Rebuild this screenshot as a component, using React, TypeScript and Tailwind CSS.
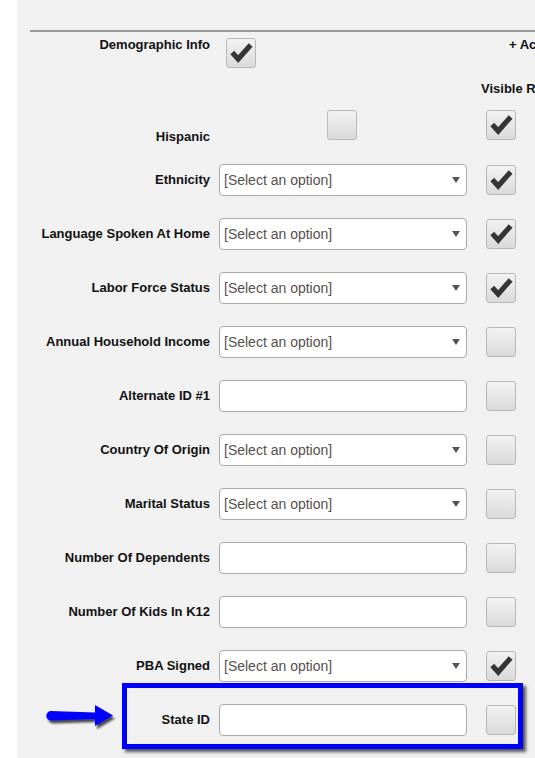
import React from 'react';

type Row = { label: string; kind: 'select' | 'text'; visible: boolean };

const ROWS: Row[] = [
  { label: 'Ethnicity', kind: 'select', visible: true },
  { label: 'Language Spoken At Home', kind: 'select', visible: true },
  { label: 'Labor Force Status', kind: 'select', visible: true },
  { label: 'Annual Household Income', kind: 'select', visible: false },
  { label: 'Alternate ID #1', kind: 'text', visible: false },
  { label: 'Country Of Origin', kind: 'select', visible: false },
  { label: 'Marital Status', kind: 'select', visible: false },
  { label: 'Number Of Dependents', kind: 'text', visible: false },
  { label: 'Number Of Kids In K12', kind: 'text', visible: false },
  { label: 'PBA Signed', kind: 'select', visible: true },
];

function CheckBox({ checked }: { checked: boolean }) {
  return (
    <div className="w-[30px] h-[30px] shrink-0 rounded-[3px] border border-[#b8b8b8] bg-gradient-to-b from-[#f2f2f2] to-[#dadada] flex items-center justify-center">
      {checked && (
        <svg width="30" height="30" viewBox="0 0 30 30">
          <polyline
            points="7.5,16.5 12,21.5 23.5,8.5"
            fill="none"
            stroke="#353535"
            strokeWidth="5.5"
            strokeLinecap="square"
            strokeLinejoin="miter"
          />
        </svg>
      )}
    </div>
  );
}

function SelectBox() {
  return (
    <div className="w-[248px] h-[32px] shrink-0 bg-white border border-[#aaaaaa] rounded-[4px] flex items-center justify-between pl-[4px] pr-[6px]">
      <span className="text-[14px] text-[#574f4f]">[Select an option]</span>
      <svg width="8" height="6" viewBox="0 0 8 6">
        <polygon points="0,0 8,0 4,6" fill="#555" />
      </svg>
    </div>
  );
}

function TextBox() {
  return <div className="w-[248px] h-[32px] shrink-0 bg-white border border-[#aaaaaa] rounded-[4px]" />;
}

function FieldRow({ row }: { row: Row }) {
  return (
    <div className="flex items-center h-[32px]">
      <div className="w-[193px] shrink-0 text-right font-bold text-[13px] text-[#111] whitespace-nowrap">{row.label}</div>
      <div className="ml-[9px] shrink-0">{row.kind === 'select' ? <SelectBox /> : <TextBox />}</div>
      <div className="ml-[19px] shrink-0">
        <CheckBox checked={row.visible} />
      </div>
    </div>
  );
}

export default function App() {
  return (
    <div className="w-[535px] h-[758px] flex overflow-hidden bg-white font-['Liberation_Sans',Arial,sans-serif]">
      <div className="w-[17px] shrink-0 bg-white" />
      <div className="relative flex-1 bg-[#f1f1f1] overflow-hidden">
        <div className="ml-[13px] mt-[30px] border-t-2 border-[#9a9a9a]" />

        {/* Header */}
        <div className="flex h-[30px] mt-[6px]">
          <div className="w-[193px] shrink-0 text-right font-bold text-[13px] text-[#111] whitespace-nowrap leading-[15px] mt-[-1px]">
            Demographic Info
          </div>
          <div className="ml-[16px] shrink-0">
            <CheckBox checked />
          </div>
          <div className="ml-[253px] shrink-0 font-bold text-[13px] text-[#111] whitespace-nowrap leading-[15px] mt-[-1px]">
            + Accommodations
          </div>
        </div>
        <div className="ml-[464px] mt-[13px] font-bold text-[13px] text-[#111] whitespace-nowrap leading-[15px]">
          Visible Required
        </div>

        {/* Hispanic */}
        <div className="flex mt-[14px] h-[32px]">
          <div className="w-[193px] shrink-0 text-right font-bold text-[13px] text-[#111] self-end leading-[15px] mb-[-2px]">
            Hispanic
          </div>
          <div className="ml-[117px] shrink-0">
            <CheckBox checked={false} />
          </div>
          <div className="ml-[129px] shrink-0">
            <CheckBox checked />
          </div>
        </div>

        <div className="flex flex-col gap-[22px] mt-[22px]">
          {ROWS.map((r) => (
            <FieldRow key={r.label} row={r} />
          ))}
          <FieldRow row={{ label: 'State ID', kind: 'text', visible: false }} />
        </div>

        {/* annotation box */}
        <div className="absolute left-[105px] top-[683px] w-[401px] h-[66px] border-[5px] border-[#0000ff] shadow-[3px_3px_3px_rgba(0,0,0,0.65)]" />

        {/* annotation arrow */}
        <svg className="absolute left-[28px] top-[700px]" width="72" height="34" viewBox="0 0 72 34">
          <defs>
            <filter id="sh" x="-20%" y="-30%" width="150%" height="180%">
              <feDropShadow dx="2" dy="3" stdDeviation="1.2" floodColor="#000" floodOpacity="0.7" />
            </filter>
          </defs>
          <g filter="url(#sh)">
            <path d="M6 11 L50 12.5 L50 5 L68 15.5 L50 26 L50 19 L6 20.5 A4.75 4.75 0 0 1 6 11 Z" fill="#0000ff" />
          </g>
        </svg>
      </div>
    </div>
  );
}
